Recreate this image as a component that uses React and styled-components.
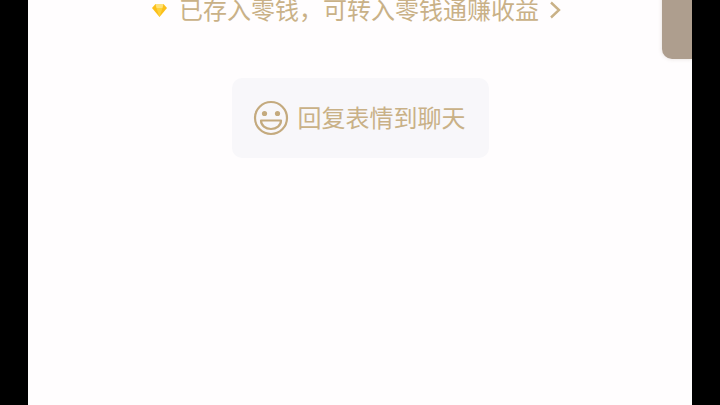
import styled, { createGlobalStyle } from "styled-components";

const Global = createGlobalStyle`
html, body {
    margin: 0;
    height: 100%;
    background: #000000;
    overflow: hidden;
}
#root {
    height: 100%;
}
`
const Screen = styled.div`
    position: relative;
    box-sizing: border-box;
    width: 664px;
    height: 405px;
    margin: 0 28px;
    background: #fffdfe;
    display: flex;
    flex-direction: column;
    align-items: center;
    font-family: "Noto Sans CJK SC", "Liberation Sans", sans-serif;
    color: #c9b187;
    overflow: hidden;
`
const Notice = styled.div`
    display: flex;
    align-items: center;
    height: 20px;
    margin-left: -8px;
    margin-bottom: 58px;
    font-size: 24px;
    line-height: 20px;
    white-space: nowrap;
`
const NoticeText = styled.span`
    padding-bottom: 2px;
`
const Gem = styled.svg`
    width: 15px;
    height: 14px;
    margin-left: 1px;
    margin-right: 12px;
    margin-top: -1px;
`
const Chevron = styled.svg`
    width: 12px;
    height: 20px;
    margin-left: 10px;
`
const ReplyCard = styled.div`
    display: flex;
    align-items: center;
    justify-content: center;
    gap: 9px;
    box-sizing: border-box;
    width: 257px;
    height: 80px;
    padding-right: 2px;
    background: #f8f7fa;
    border-radius: 10px;
    font-size: 24px;
    white-space: nowrap;
`
const ReplyLabel = styled.span`
    line-height: 32px;
    padding-bottom: 2px;
`
const Smile = styled.svg`
    width: 36px;
    height: 36px;
`
const Thumb = styled.div`
    position: absolute;
    top: -12px;
    right: 0;
    width: 30px;
    height: 71px;
    background: #ae9e8e;
    border-bottom-left-radius: 10px;
    box-shadow: 0 0 4px rgba(120, 100, 80, 0.2);
`

const App = () => {
    return (
        <>
            <Global />
            <Screen>
                <Notice>
                    <Gem viewBox="0 0 15 14">
                        <path d="M3.5 1h8L15 5 7.5 14 0 5z" fill="#fbbf1a" />
                        <path d="M4.500 5h6L7.500 14z" fill="#fdd23a" />
                        <path d="M3.500 1h8L10.500 5h-6z" fill="#fee27a" />
                    </Gem>
                    <NoticeText>已存入零钱，可转入零钱通赚收益</NoticeText>
                    <Chevron viewBox="0 0 12 20">
                        <path d="M2 2.500 10 10 2 17.500" fill="none" stroke="#c9b187" strokeWidth="2.400" />
                    </Chevron>
                </Notice>
                <ReplyCard>
                    <Smile viewBox="0 0 36 36">
                        <circle cx="18" cy="18" r="16" fill="none" stroke="#c4aa7e" strokeWidth="2.200" />
                        <circle cx="11.500" cy="13.500" r="2.600" fill="#c4aa7e" />
                        <circle cx="24.500" cy="13.500" r="2.600" fill="#c4aa7e" />
                        <path d="M8 20.500h20c0 5-4.500 8.500-10 8.500s-10-3.500-10-8.500z" fill="none" stroke="#c4aa7e" strokeWidth="2.200" strokeLinejoin="round" />
                    </Smile>
                    <ReplyLabel>回复表情到聊天</ReplyLabel>
                </ReplyCard>
                <Thumb />
            </Screen>
        </>
    )
}
export default App;
